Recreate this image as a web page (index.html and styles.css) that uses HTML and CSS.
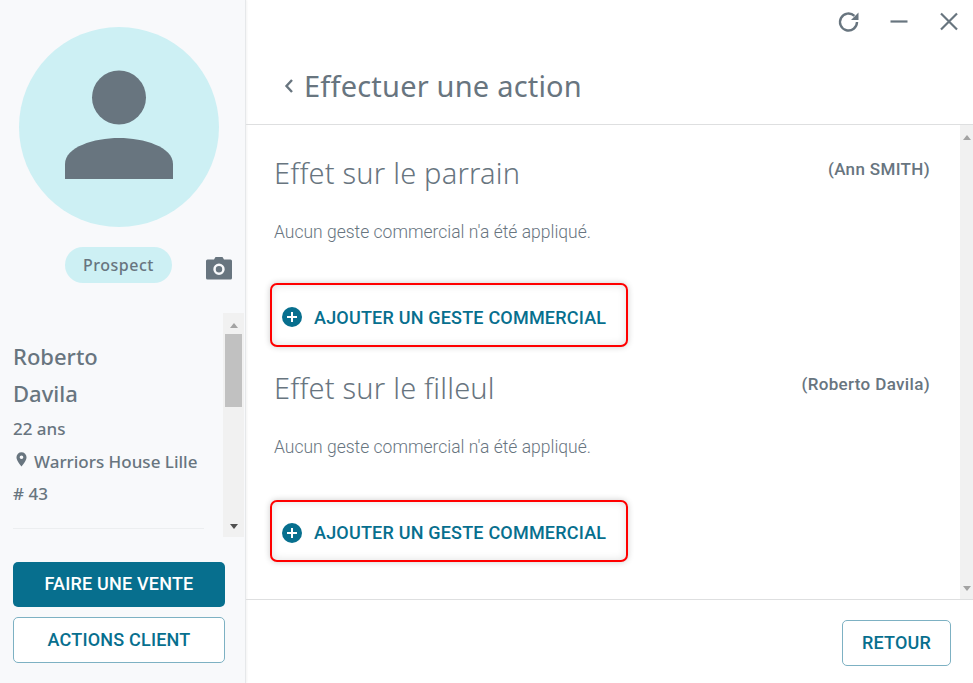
FILE: index.html
```html
<!DOCTYPE html>
<html lang="fr">
<head>
<meta charset="utf-8">
<title>Effectuer une action</title>
<link rel="stylesheet" href="styles.css">
</head>
<body>
<div class="app">
  <aside class="sidebar">
    <div class="avatar">
      <svg viewBox="0 0 110 110" width="110" height="110" class="avatar-icon"><circle cx="55" cy="27.500" r="27" fill="#68757f"/><path d="M1 109V94C1 77 30 68 55 68S109 77 109 94V109Z" fill="#68757f"/></svg>
    </div>
    <div class="status-row">
      <span class="pill">Prospect</span>
      <svg class="camera" viewBox="0 0 26 24" width="26" height="24"><path fill-rule="evenodd" d="M1.5 3.5H8L9.5 1H16.5L18 3.5H24.5A1.5 1.5 0 0 1 26 5V22A1.5 1.5 0 0 1 24.5 23.500H1.500A1.500 1.500 0 0 1 0 22V5A1.500 1.500 0 0 1 1.500 3.500ZM13 7.500A5.700 5.700 0 1 0 13 18.900A5.700 5.700 0 1 0 13 7.500ZM13 10A3.200 3.200 0 1 1 13 16.400A3.200 3.200 0 1 1 13 10Z" fill="#68757f"/></svg>
    </div>
    <div class="info-wrap">
      <div class="info">
        <div class="name">Roberto</div>
        <div class="name">Davila</div>
        <div class="meta">22 ans</div>
        <div class="meta place">
          <svg viewBox="0 0 12 16" width="11" height="15"><path fill-rule="evenodd" d="M6 0A5.500 5.500 0 0 0 .5 5.500C.5 9.500 6 15.500 6 15.500S11.500 9.500 11.500 5.500A5.500 5.500 0 0 0 6 0ZM6 3.500A2 2 0 1 1 6 7.500A2 2 0 1 1 6 3.500Z" fill="#68757f"/></svg>
          <span>Warriors House Lille</span>
        </div>
        <div class="meta"># 43</div>
        <div class="rule"></div>
      </div>
      <div class="scrollbar side-bar">
        <span class="arrow up dark"></span>
        <span class="thumb"></span>
        <span class="arrow down darker"></span>
      </div>
    </div>
    <div class="side-actions">
      <button class="btn primary">FAIRE UNE VENTE</button>
      <button class="btn outline">ACTIONS CLIENT</button>
    </div>
  </aside>
  <main class="main">
    <div class="window-tools">
      <svg viewBox="0 0 24 24" width="24" height="24"><path d="M20 12a8.500 8.500 0 1 1-2.600-6.100" fill="none" stroke="#68757f" stroke-width="2.400"/><path d="M21.500 2.500V10H14Z" fill="#68757f"/></svg>
      <svg viewBox="0 0 24 24" width="24" height="24"><path d="M3.500 11.500H20.500" stroke="#68757f" stroke-width="2.200"/></svg>
      <svg viewBox="0 0 24 24" width="24" height="24"><path d="M4 3.500L20 19.500M20 3.500L4 19.500" stroke="#68757f" stroke-width="2.200"/></svg>
    </div>
    <header class="page-head">
      <svg viewBox="0 0 10 16" width="10" height="16"><path d="M8 2L2.500 8L8 14" fill="none" stroke="#68757f" stroke-width="2.400"/></svg>
      <h1>Effectuer une action</h1>
    </header>
    <div class="body">
      <div class="content">
        <section class="effect first">
          <div class="effect-head"><h2>Effet sur le parrain</h2><span class="who">(Ann SMITH)</span></div>
          <p class="none">Aucun geste commercial n'a été appliqué.</p>
          <button class="add tall">
            <svg viewBox="0 0 20 20" width="20" height="20"><circle cx="10" cy="10" r="10" fill="#076f8e"/><path d="M10 5V15M5 10H15" stroke="#fff" stroke-width="2"/></svg>
            <span>AJOUTER UN GESTE COMMERCIAL</span>
          </button>
        </section>
        <section class="effect">
          <div class="effect-head"><h2>Effet sur le filleul</h2><span class="who">(Roberto Davila)</span></div>
          <p class="none">Aucun geste commercial n'a été appliqué.</p>
          <button class="add">
            <svg viewBox="0 0 20 20" width="20" height="20"><circle cx="10" cy="10" r="10" fill="#076f8e"/><path d="M10 5V15M5 10H15" stroke="#fff" stroke-width="2"/></svg>
            <span>AJOUTER UN GESTE COMMERCIAL</span>
          </button>
        </section>
      </div>
      <div class="scrollbar main-bar">
        <span class="arrow up"></span>
        <span class="arrow down"></span>
      </div>
    </div>
    <footer class="foot"><button class="btn outline back">RETOUR</button></footer>
  </main>
</div>
</body>
</html>
```
FILE: styles.css
```css
* { box-sizing: border-box; }
html, body { margin: 0; height: 100%; }
body { background: #fff; color: #68757f; font-family: Roboto, "Liberation Sans", sans-serif; overflow: hidden; }
button { font-family: Roboto, "Liberation Sans", sans-serif; cursor: pointer; }
.app { display: flex; width: 973px; height: 683px; }

.sidebar { width: 246px; flex: none; background: #f8f9fb; border-right: 1px solid #e6e8ea; box-shadow: 1px 0 2px rgba(0,0,0,.05); display: flex; flex-direction: column; padding-top: 27px; }
.avatar { width: 200px; height: 200px; margin-left: 19px; border-radius: 50%; background: #cdf0f4; display: flex; justify-content: center; padding-top: 43px; }
.status-row { display: flex; align-items: center; margin-top: 20px; height: 36px; padding-left: 65px; }
.pill { width: 107px; height: 36px; border-radius: 18px; background: #cdf0f4; font: 500 16px/36px "Noto Sans", sans-serif; text-align: center; letter-spacing: .5px; }
.camera { margin-left: 34px; margin-top: 5px; }

.info-wrap { display: flex; height: 224px; margin-top: 30px; }
.info { width: 223px; padding: 25px 19px 0 13px; }
.name { font: 500 22px/37px "Noto Sans", sans-serif; height: 37px; }
.meta { font: 500 17px/20px "Noto Sans", sans-serif; margin-top: 13px; white-space: nowrap; }
.name + .meta { margin-top: 7px; }
.place { display: flex; align-items: flex-start; gap: 7px; margin-left: 3px; }
.place + .meta { margin-top: 12px; }
.rule { height: 1px; background: #eceef0; margin-top: 24px; }

.scrollbar { background: #f1f1f1; display: flex; flex-direction: column; align-items: center; position: relative; }
.side-bar { width: 21px; height: 224px; padding-top: 10px; }
.thumb { width: 17px; height: 73px; background: #c1c1c1; margin-top: 6px; }
.arrow { width: 0; height: 0; border-left: 4.500px solid transparent; border-right: 4.500px solid transparent; }
.arrow.up { border-bottom: 5px solid #a3a3a3; }
.arrow.down { border-top: 5px solid #a3a3a3; margin-top: auto; margin-bottom: 8px; }
.arrow.dark { border-bottom-color: #a3a3a3; }
.arrow.darker { border-top-color: #505050; }

.side-actions { display: flex; flex-direction: column; gap: 10px; padding: 25px 0 0 13px; }
.btn { width: 212px; height: 46px; border-radius: 5px; font-size: 18px; font-weight: 500; letter-spacing: .2px; padding: 0 0 2px; }
.primary { background: #076f8e; border: 0; color: #fff; height: 45px; }
.outline { background: #fff; border: 1px solid #7db1c3; color: #076f8e; }

.main { flex: 1; display: flex; flex-direction: column; min-width: 0; }
.window-tools { height: 44px; display: flex; justify-content: flex-end; gap: 26px; padding: 10px 12px 0 0; }
.page-head { height: 81px; display: flex; align-items: center; gap: 10px; padding: 4px 0 0 38px; border-bottom: 1px solid #dedfe0; }
h1 { margin: 0; font: 400 29px/40px "Noto Sans", sans-serif; letter-spacing: .2px; color: #68757f; }

.body { height: 475px; display: flex; border-bottom: 1px solid #dedfe0; }
.content { flex: 1; padding: 27px 30px 0 24px; }
.effect-head { display: flex; justify-content: space-between; align-items: flex-start; padding-left: 5px; }
h2 { margin: 0 0 0 -1px; font: 300 29px/42px "Noto Sans", sans-serif; letter-spacing: .2px; color: #68757f; }
.who { font-size: 17px; font-weight: 500; line-height: 24px; letter-spacing: .35px; margin-top: 5px; }
.none { margin: 26px 0 0 4px; font-size: 17.500px; font-weight: 300; line-height: 24px; height: 24px; color: #68757f; }
.add { display: flex; align-items: center; gap: 12px; width: 358px; height: 64px; margin-top: 39px; padding: 4px 0 0 10px; background: #fff; border: 2px solid #f00; border-radius: 7px; box-shadow: 0 0 6px rgba(0,0,0,.2), inset 0 0 8px rgba(0,0,0,.12); color: #076f8e; font-size: 18px; font-weight: 500; letter-spacing: .2px; }
.add:not(.tall) { height: 62px; margin-top: 41px; padding-top: 3px; }
.first { height: 215px; }
.main-bar { width: 13px; height: 474px; padding-top: 10px; }
.foot { flex: 1; display: flex; justify-content: flex-end; padding: 20px 22px 0 0; }
.back { width: 109px; }
```
